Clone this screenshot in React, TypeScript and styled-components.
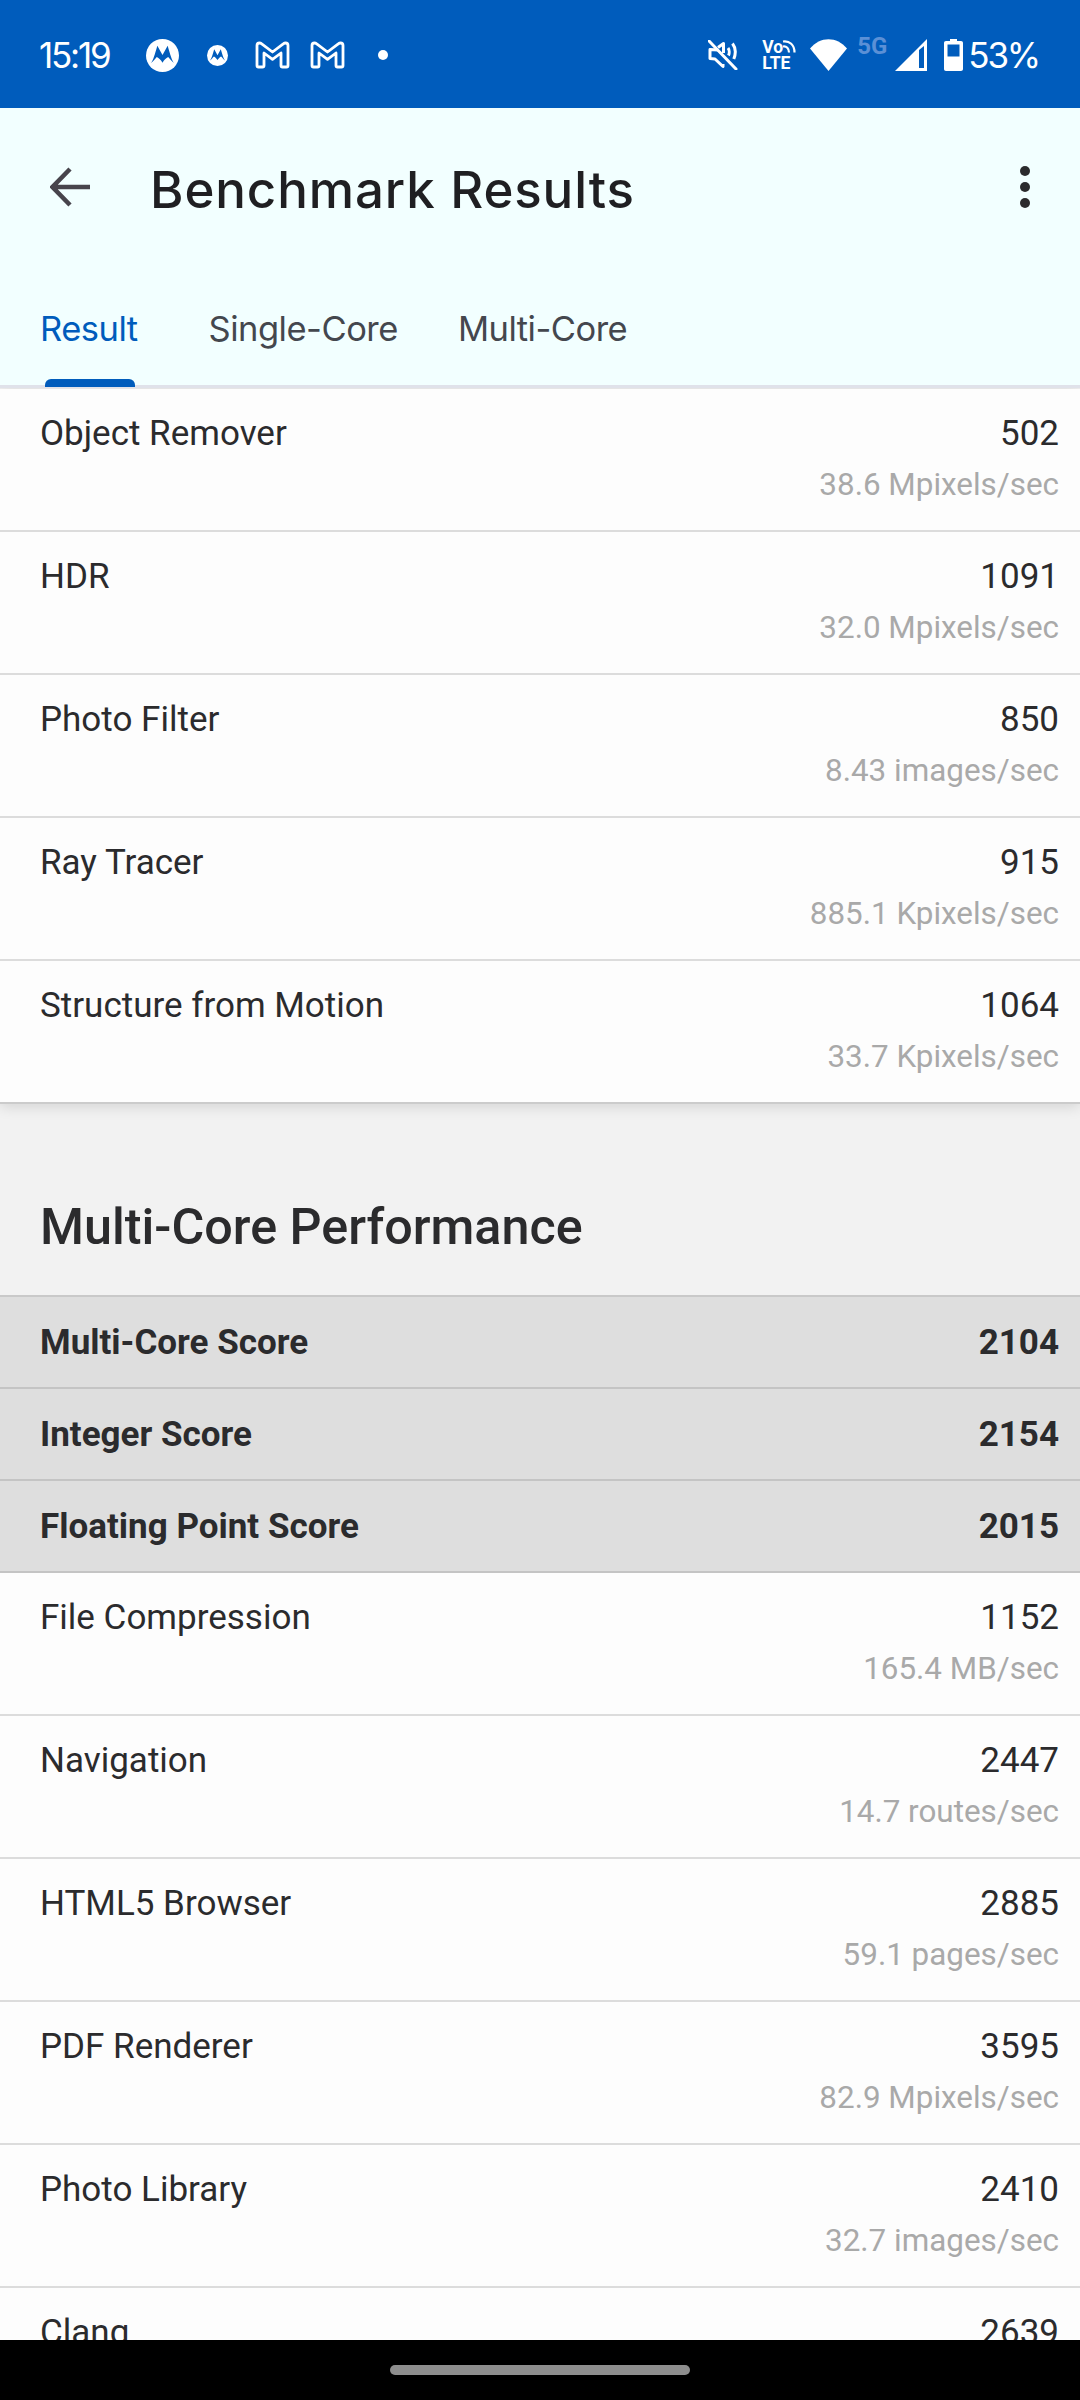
import * as React from "react";
import styled, { createGlobalStyle } from "styled-components";

const GlobalStyle = createGlobalStyle`
  html, body {
    margin: 0;
    padding: 0;
    background: #000;
  }
  * {
    box-sizing: border-box;
  }
`;

const Screen = styled.div`
  width: 1080px;
  height: 2400px;
  display: flex;
  flex-direction: column;
  overflow: hidden;
  background: #f2f2f2;
  font-family: Roboto, sans-serif;
  color: #2b2b2d;
`;

const StatusBar = styled.div`
  flex: 0 0 108px;
  display: flex;
  align-items: center;
  justify-content: space-between;
  padding: 2px 41px 0 39px;
  background: #005cbc;
  color: #fff;
`;

const StatusGroup = styled.div`
  display: flex;
  align-items: center;
`;

const StatusText = styled.span`
  font-family: Inter, sans-serif;
  font-size: 35px;
  line-height: 40px;
  letter-spacing: -2.2px;
`;

const Icon = styled.svg<{ $gap: number }>`
  display: block;
  flex: none;
  margin-left: ${p => p.$gap}px;
`;

const Lte = styled.div<{ $gap: number }>`
  position: relative;
  width: 34px;
  height: 32px;
  margin-left: ${p => p.$gap}px;
  font-family: Roboto, sans-serif;
  font-weight: 700;
  font-size: 17.5px;
  line-height: 16px;
`;

const LteWaves = styled.svg`
  position: absolute;
  right: 0;
  top: 0;
`;

const FiveG = styled.span<{ $gap: number }>`
  align-self: flex-start;
  margin: -2px 0 0 ${p => p.$gap}px;
  font-size: 24px;
  line-height: 26px;
  font-weight: 700;
  color: #5b90d6;
`;

const BatteryText = styled(StatusText)`
  margin-left: 5px;
  letter-spacing: -2.2px;
`;

const AppBar = styled.header`
  flex: 0 0 280px;
  display: flex;
  flex-direction: column;
  background: #f2ffff;
  border-bottom: 3px solid #e0e2ea;
`;

const TitleRow = styled.div`
  flex: 0 0 158px;
  display: flex;
  align-items: center;
  padding: 0 50px;
`;

const BackIcon = styled.svg`
  display: block;
  flex: none;
`;

const Title = styled.h1`
  flex: 1 1 0;
  margin: 5px 0 0 60px;
  font-family: Inter, sans-serif;
  font-size: 51px;
  line-height: 60px;
  font-weight: 500;
  letter-spacing: 0.9px;
  color: #1f1f22;
`;

const MoreDots = styled.div`
  display: flex;
  flex-direction: column;
  gap: 6px;
`;

const Dot = styled.span`
  width: 10px;
  height: 10px;
  border-radius: 50%;
  background: #2b2b2d;
`;

const TabRow = styled.nav`
  flex: 1 1 0;
  display: flex;
  align-items: flex-start;
  padding: 41px 0 0 40px;
`;

const Tab = styled.div<{ $active?: boolean; $gap: number }>`
  position: relative;
  height: 76px;
  margin-left: ${p => p.$gap}px;
  font-family: Inter, sans-serif;
  font-size: 34.5px;
  line-height: 44px;
  letter-spacing: -0.5px;
  color: ${p => (p.$active ? "#005cbc" : "#44474e")};
`;

const TabMark = styled.span`
  position: absolute;
  left: 5px;
  bottom: -4px;
  width: 90px;
  height: 8px;
  border-radius: 6px 6px 0 0;
  background: #005cbc;
`;

const Content = styled.main`
  flex: 1 1 0;
  min-height: 0;
  overflow: hidden;
  padding-top: 1px;
`;

const Card = styled.section`
  background: #fdfdfd;
  box-shadow: 0 2px 14px rgba(0, 0, 0, 0.14);
  position: relative;
`;

const Row = styled.div`
  height: 143px;
  padding: 24px 21px 0 40px;
  display: flex;
  justify-content: space-between;
  background: #fdfdfd;
  border-bottom: 2px solid #dcdcdc;

  ${Card} > &:last-child {
    border-bottom-color: #cbcbcb;
  }
`;

const RowName = styled.div`
  font-size: 35px;
  line-height: 42px;
`;

const RowValues = styled.div`
  display: flex;
  flex-direction: column;
  align-items: flex-end;
`;

const RowScore = styled.div`
  font-size: 35px;
  line-height: 42px;
`;

const RowRate = styled.div`
  margin-top: 10px;
  font-size: 31.4px;
  line-height: 40px;
  color: #a9a9a9;
`;

const SectionTitle = styled.h2`
  height: 193px;
  margin: 0;
  padding: 93px 0 0 40px;
  font-size: 50.3px;
  line-height: 60px;
  font-weight: 500;
  color: #2b2b2d;
  border-bottom: 2px solid #c9c9c9;
`;

const ScoreRow = styled.div`
  height: 92px;
  padding: 0 21px 0 40px;
  display: flex;
  align-items: center;
  justify-content: space-between;
  background: #dedede;
  border-bottom: 2px solid #c4c4c4;
  font-size: 35px;
  font-weight: 700;
`;

const NavBar = styled.footer`
  flex: 0 0 60px;
  display: flex;
  justify-content: center;
  padding-top: 25px;
  background: #000;
`;

const HomePill = styled.div`
  width: 300px;
  height: 10px;
  border-radius: 5px;
  background: #8e8e8e;
`;

interface Benchmark {
  name: string;
  score: string;
  rate?: string;
}

const singleCore: Benchmark[] = [
  { name: "Object Remover", score: "502", rate: "38.6 Mpixels/sec" },
  { name: "HDR", score: "1091", rate: "32.0 Mpixels/sec" },
  { name: "Photo Filter", score: "850", rate: "8.43 images/sec" },
  { name: "Ray Tracer", score: "915", rate: "885.1 Kpixels/sec" },
  { name: "Structure from Motion", score: "1064", rate: "33.7 Kpixels/sec" }
];

const multiScores: Benchmark[] = [
  { name: "Multi-Core Score", score: "2104" },
  { name: "Integer Score", score: "2154" },
  { name: "Floating Point Score", score: "2015" }
];

const multiCore: Benchmark[] = [
  { name: "File Compression", score: "1152", rate: "165.4 MB/sec" },
  { name: "Navigation", score: "2447", rate: "14.7 routes/sec" },
  { name: "HTML5 Browser", score: "2885", rate: "59.1 pages/sec" },
  { name: "PDF Renderer", score: "3595", rate: "82.9 Mpixels/sec" },
  { name: "Photo Library", score: "2410", rate: "32.7 images/sec" },
  { name: "Clang", score: "2639" }
];

const MotoIcon = ({ size, gap }: { size: number; gap: number }) => (
  <Icon $gap={gap} width={size} height={size} viewBox="0 0 32 32">
    <circle cx="16" cy="16" r="16" fill="#fff" />
    <path
      d="M4.5 23.5C7 21 8.5 15 11 6.5L16 15.5 21 6.5C23.5 15 25 21 27.5 23.5 25.5 22.5 23.5 19.5 21.5 17.5 19.5 18.5 17.5 20.5 16 23 14.5 20.5 12.5 18.5 10.5 17.5 8.5 19.5 6.5 22.5 4.5 23.5Z"
      fill="#005cbc"
    />
  </Icon>
);

const GmailIcon = ({ gap }: { gap: number }) => (
  <Icon $gap={gap} width="35" height="28" viewBox="0 0 35 28">
    <path
      d="M2 4.5C2 2.8 3.3 2 4.5 2 5.2 2 5.8 2.2 6.4 2.7L17.5 11 28.6 2.7C29.2 2.2 29.8 2 30.5 2 31.7 2 33 2.8 33 4.5V24.5C33 25.4 32.4 26 31.5 26H27.5C26.6 26 26 25.4 26 24.5V12L17.5 18.3 9 12V24.5C9 25.4 8.4 26 7.5 26H3.5C2.6 26 2 25.4 2 24.5Z"
      fill="none"
      stroke="#fff"
      strokeWidth="2.8"
      strokeLinejoin="round"
    />
  </Icon>
);

const BenchmarkRow = ({ item }: { item: Benchmark }) => (
  <Row>
    <RowName>{item.name}</RowName>
    <RowValues>
      <RowScore>{item.score}</RowScore>
      {item.rate && <RowRate>{item.rate}</RowRate>}
    </RowValues>
  </Row>
);

const App = () => (
  <>
    <GlobalStyle />
    <Screen>
      <StatusBar>
        <StatusGroup>
          <StatusText>15:19</StatusText>
          <MotoIcon size={33} gap={36} />
          <MotoIcon size={21} gap={28} />
          <GmailIcon gap={27} />
          <GmailIcon gap={20} />
          <Icon $gap={33} width="10" height="10" viewBox="0 0 10 10">
            <circle cx="5" cy="5" r="5" fill="#fff" />
          </Icon>
        </StatusGroup>
        <StatusGroup>
          <Icon $gap={0} width="30" height="30" viewBox="0 0 30 30" fill="none" stroke="#fff" strokeWidth="3">
            <path d="M1 1L28 29" strokeLinecap="round" />
            <path d="M10 10L2 9.5V18.5L7 19 15 26.5V24" strokeLinejoin="round" />
            <path d="M10 7.5L15.5 3.5V13" strokeLinejoin="round" />
            <path d="M20 8C21.5 10 21.5 13.5 20.5 15.5" />
            <path d="M24.5 3.5C27.5 7.5 28 13.5 25.8 19" />
          </Icon>
          <Lte $gap={24}>
            Vo
            <LteWaves width="14" height="15" viewBox="0 0 14 15" fill="none" stroke="#fff" strokeWidth="2.2">
              <path d="M1 7.5C4.5 6.8 7 9.5 7 13.5" />
              <path d="M1 2.5C7.5 1.5 12.5 6 12.5 13.5" />
            </LteWaves>
            <br />
            LTE
          </Lte>
          <Icon $gap={14} width="37" height="32" viewBox="0 0 37 32">
            <path d="M0 9.5C10 -3 27 -3 37 9.5L18.5 32Z" fill="#fff" />
          </Icon>
          <FiveG $gap={10}>5G</FiveG>
          <Icon $gap={8} width="32" height="32" viewBox="0 0 32 32">
            <path d="M32 0V32H0ZM29 7L24 11V29H29Z" fill="#fff" fillRule="evenodd" />
          </Icon>
          <Icon $gap={17} width="19" height="32" viewBox="0 0 19 32">
            <path
              d="M6 0H13V2H17C18.2 2 19 2.8 19 4V30C19 31.2 18.2 32 17 32H2C0.8 32 0 31.2 0 30V4C0 2.8 0.8 2 2 2H6ZM3.5 5.5V17.5H15.5V5.5Z"
              fill="#fff"
              fillRule="evenodd"
            />
          </Icon>
          <BatteryText>53%</BatteryText>
        </StatusGroup>
      </StatusBar>
      <AppBar>
        <TitleRow>
          <BackIcon width="40" height="40" viewBox="0 0 40 40" fill="none" stroke="#47444c" strokeWidth="4.5">
            <path d="M40 20H3M20 2L2.5 20 20 38" />
          </BackIcon>
          <Title>Benchmark Results</Title>
          <MoreDots>
            <Dot />
            <Dot />
            <Dot />
          </MoreDots>
        </TitleRow>
        <TabRow>
          <Tab $active $gap={0}>
            Result
            <TabMark />
          </Tab>
          <Tab $gap={71}>Single-Core</Tab>
          <Tab $gap={60}>Multi-Core</Tab>
        </TabRow>
      </AppBar>
      <Content>
        <Card>
          {singleCore.map(item => (
            <BenchmarkRow key={item.name} item={item} />
          ))}
        </Card>
        <SectionTitle>Multi-Core Performance</SectionTitle>
        {multiScores.map(item => (
          <ScoreRow key={item.name}>
            <span>{item.name}</span>
            <span>{item.score}</span>
          </ScoreRow>
        ))}
        {multiCore.map(item => (
          <BenchmarkRow key={item.name} item={item} />
        ))}
      </Content>
      <NavBar>
        <HomePill />
      </NavBar>
    </Screen>
  </>
);

export default App;
